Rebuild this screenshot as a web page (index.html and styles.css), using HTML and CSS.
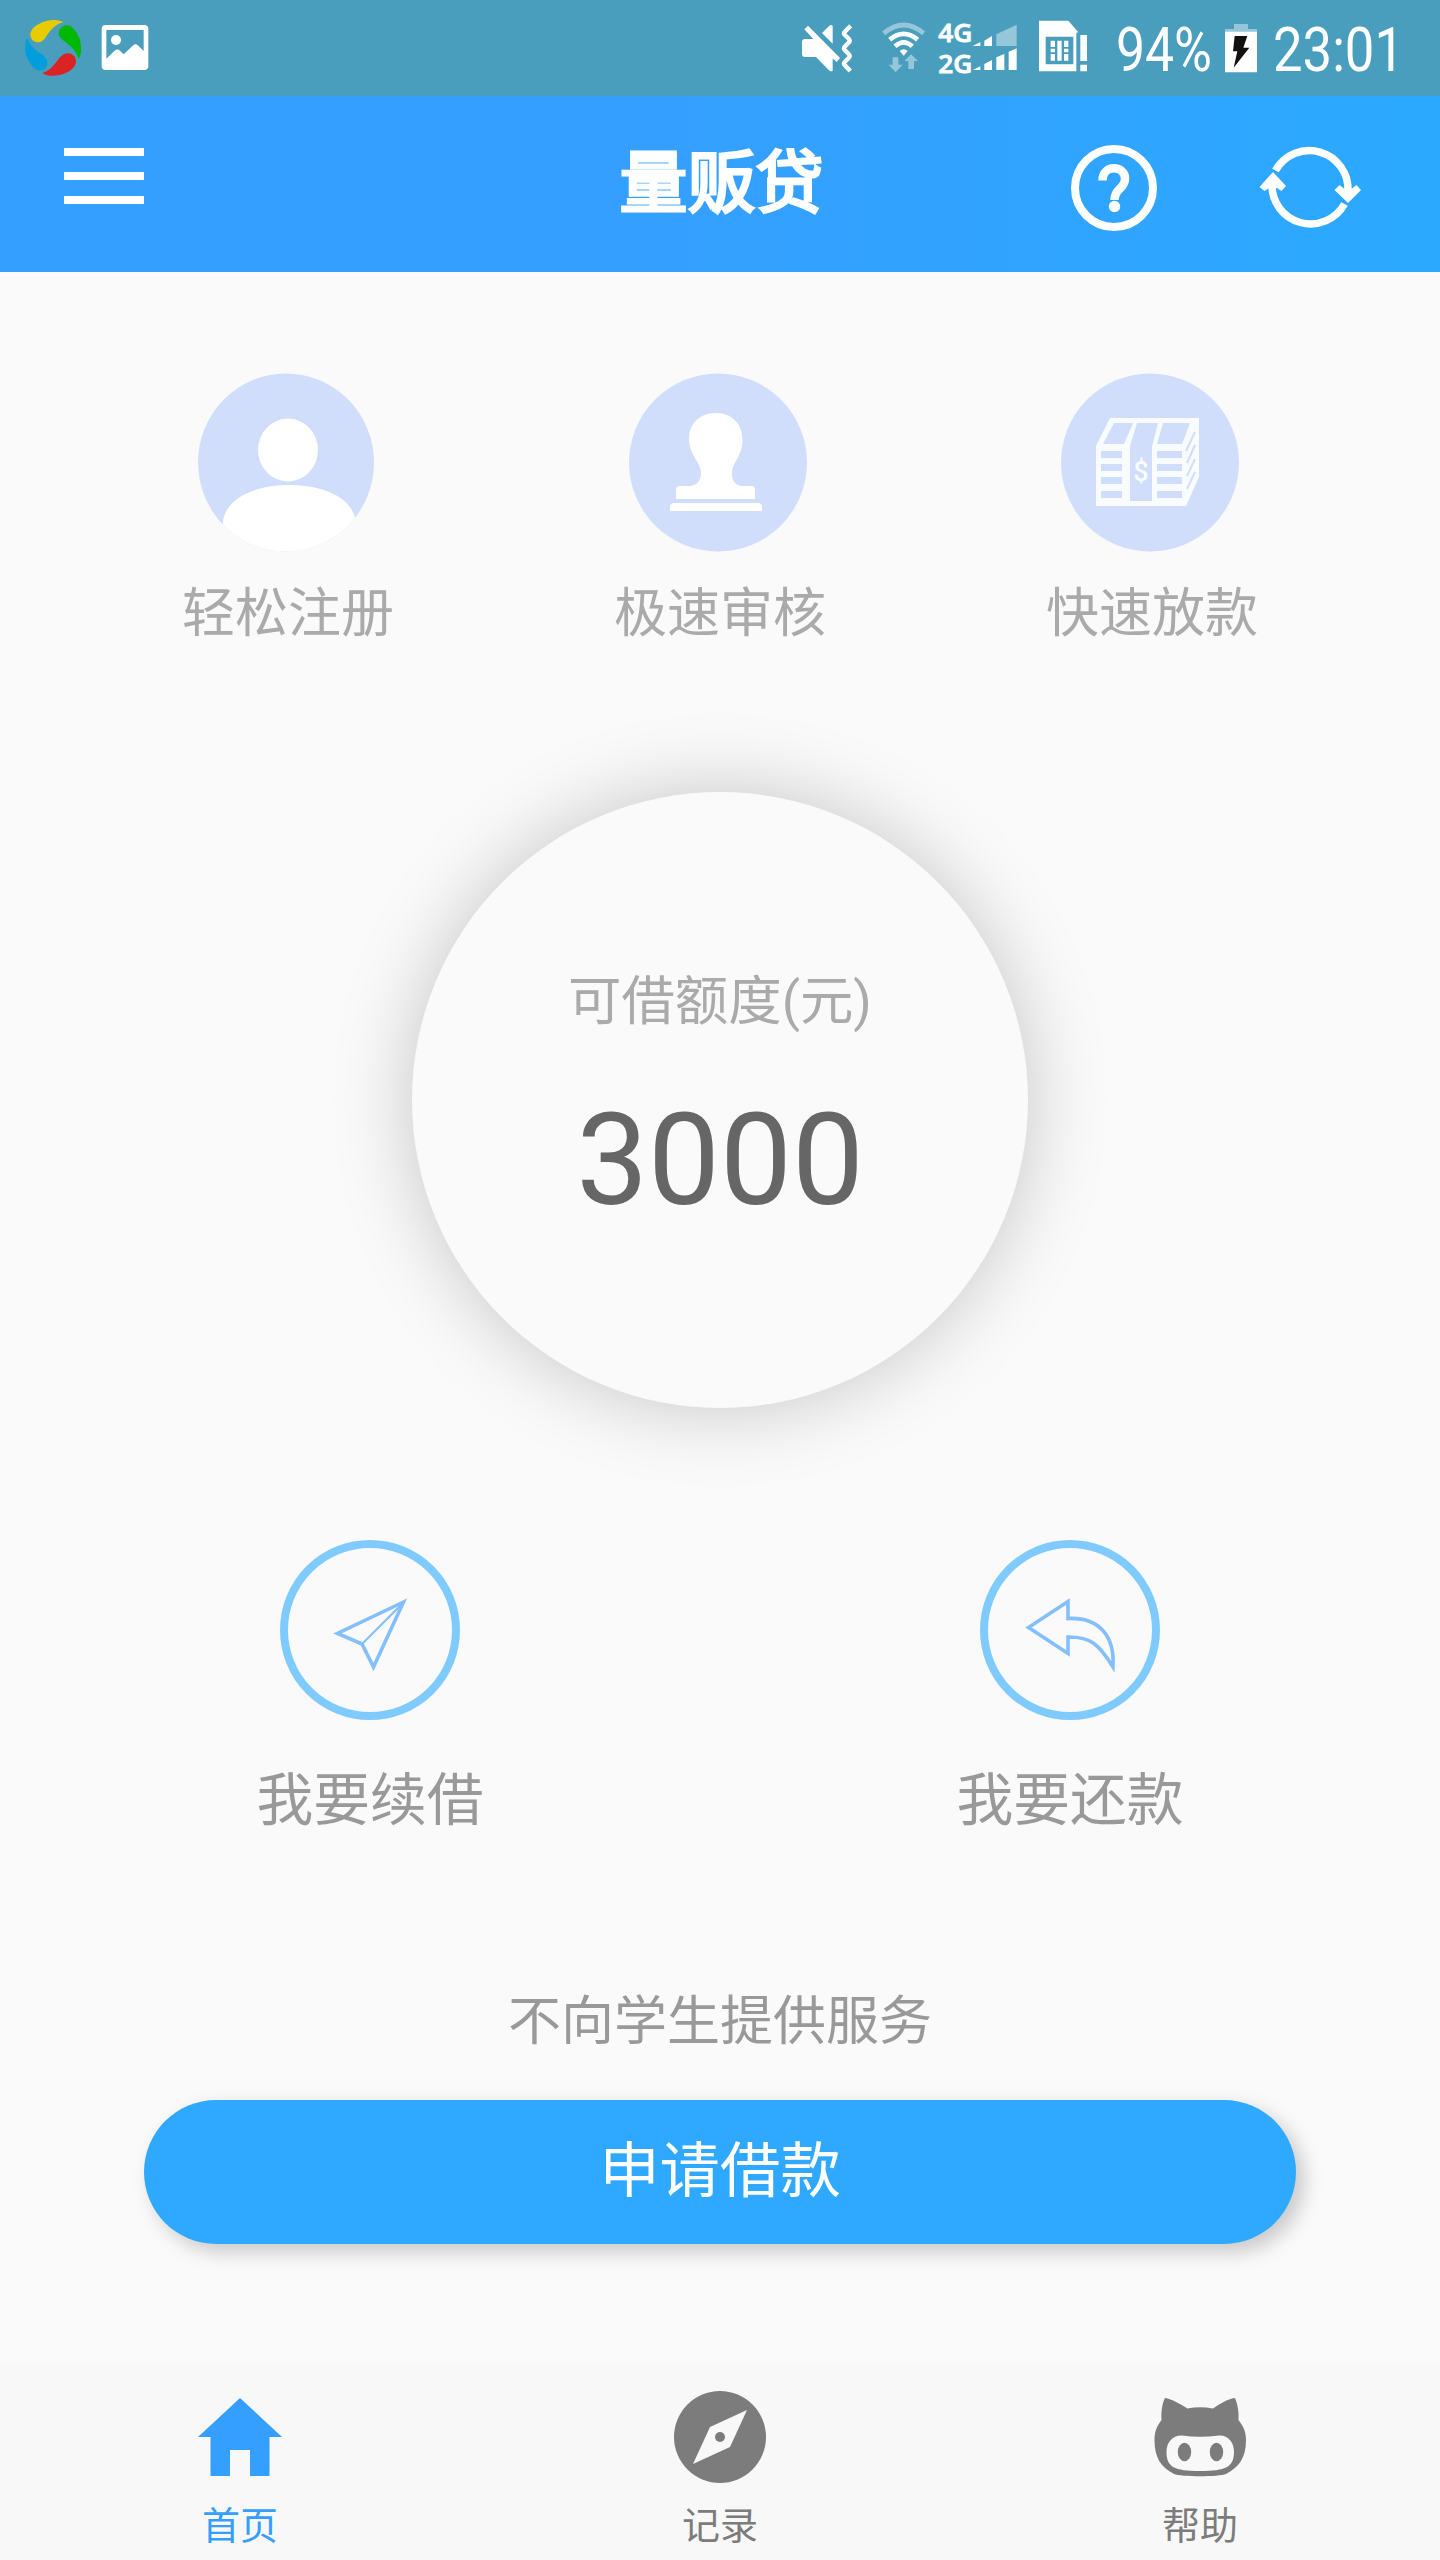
FILE: index.html
```html
<!DOCTYPE html>
<html lang="zh-CN">
<head>
<meta charset="utf-8">
<title>量贩贷</title>
<link rel="stylesheet" href="styles.css">
</head>
<body>
<div class="app">
  <div class="status">
    <svg class="st-pinwheel" viewBox="75 54 168 180">
      <path fill="#e9cc00" d="M190 67C176 58 148 57 124 68C103 77 90 91 91 106C93 120 104 128 117 127C126 126 133 119 138 110C152 91 166 71 190 67Z"/>
      <path fill="#00b800" d="M236 176C230 158 218 143 200 129C186 119 176 111 176 99C177 85 188 76 201 76C216 76 229 93 237 112C243 126 244 145 243 158C241 166 239 171 236 176Z"/>
      <path fill="#dc2323" d="M127 219C145 213 158 201 169 186C179 172 187 161 204 160C219 160 228 171 228 185C227 201 212 212 196 220C176 229 145 231 127 219Z"/>
      <path fill="#009edb" d="M82 113C86 131 99 144 116 157C130 166 143 174 142 189C141 204 130 212 119 212C104 211 92 195 83 177C74 159 72 131 82 113Z"/>
    </svg>
    <svg class="st-image" viewBox="303 54 144 168">
      <path fill="#fff" fill-rule="evenodd" d="M317 75H433Q445 75 445 87V198Q445 210 433 210H317Q305 210 305 198V87Q305 75 317 75ZM319 90V176L344 152Q352 145 360 152L371 163L398 137Q407 129 415 137L431 153V90Z"/>
      <circle cx="348" cy="120" r="15" fill="#fff"/>
    </svg>
    <svg class="st-mute" viewBox="60 54 162 168">
      <path fill="#fff" d="M84 77L180 174L170 186L158 175V212Q152 216 146 210L108 171H75Q66 171 66 162V126Q66 117 75 117H100L73 88ZM126 99L147 78Q152 73 158 77V131Z"/>
      <path fill="none" stroke="#fff" stroke-width="13" stroke-linejoin="round" d="M212 77L194 96Q190 100 194 104L207 117Q211 122 207 127L194 140Q190 145 194 150L207 163Q211 168 207 173L194 186Q190 191 194 195L211 213"/>
    </svg>
    <svg class="st-wifi" viewBox="303 54 135 168">
      <g fill="none" stroke="#fff" stroke-width="14">
        <path stroke="#96c6da" d="M311 100Q371 50 431 100"/>
        <path d="M329 119Q371 84 413 119"/>
        <path d="M345 139Q371 115 397 139"/>
      </g>
      <path fill="#fff" d="M359 153Q371 143 383 153L371 167Z"/>
      <path fill="#96c6da" d="M338 172H355V194H368L347 217L326 194H338ZM393 163L414 183H402V207H385V183H373Z"/>
    </svg>
    <svg class="st-signal" viewBox="474 54 240 168">
      <g fill="#fff">
        <text class="st-net" x="475" y="125" textLength="102" lengthAdjust="spacingAndGlyphs">4G</text>
        <text class="st-net" x="475" y="218" textLength="102" lengthAdjust="spacingAndGlyphs">2G</text>
        <path d="M578 138L601 126V138ZM613 122L636 108V138H613ZM578 210L601 199V210ZM613 192L636 180V210H613ZM649 172L673 162V210H649ZM686 155L710 145V210H686Z"/>
      </g>
      <path fill="#96c6da" d="M649 103L710 74V138H649Z"/>
    </svg>
    <svg class="st-sim" viewBox="774 54 150 168">
      <path fill="#fff" fill-rule="evenodd" d="M777 62H865L895 97L889 98V214H777ZM797 110V193H880V110Z"/>
      <path fill="#fff" d="M812 122H825V141H812ZM812 146H825V157H812ZM812 162H825V182H812ZM832 122H845V182H832ZM852 122H865V141H852ZM852 146H865V157H852ZM852 162H865V182H852ZM901 105H921V183H901ZM901 194H921V214H901Z"/>
    </svg>
    <svg class="st-level" viewBox="0 0 97 56"><text class="st-text" x="0" y="53" textLength="96" lengthAdjust="spacingAndGlyphs">94%</text></svg>
    <svg class="st-battery" viewBox="375 54 96 168">
      <path fill="#96c6da" d="M402 72H444V87H471V97H375V87H402Z"/>
      <path fill="#fff" d="M375 95H471V217H375Z"/>
      <path fill="#111" d="M404 108H442L430 143H448L401 203L412 154H399Z"/>
    </svg>
    <svg class="st-clock" viewBox="0 0 130 56"><text class="st-text" x="-1" y="53" textLength="131" lengthAdjust="spacingAndGlyphs">23:01</text></svg>
  </div>

  <header class="header">
    <div class="menu"><span></span><span></span><span></span></div>
    <h1 class="title">量贩贷</h1>
    <div class="header-actions">
      <svg class="help" viewBox="0 0 86 86" fill="none" stroke="#fff">
        <circle cx="43" cy="43" r="39" stroke-width="8"/>
        <path stroke-width="8.500" d="M31.500 35.500C31.500 19 54.500 20 54 34C54 44 43.500 43 43.500 55"/>
        <circle cx="43.500" cy="61.500" r="5.700" fill="#fff" stroke="none"/>
      </svg>
      <svg class="refresh" viewBox="0 0 102 86" fill="none" stroke="#fff" stroke-width="7.500">
        <path d="M16.500 25.500A38.700 38.700 0 0 1 89 46"/>
        <path d="M85.500 59A38.700 38.700 0 0 1 13 39"/>
        <path fill="#fff" stroke="none" d="M89 58L75.500 45L80.500 40L85 43.500H93L97.500 40L102 45ZM14 27L0.500 42L5.500 46L10 43H18L22.500 46L27 41Z"/>
      </svg>
    </div>
  </header>

  <main class="main">
    <section class="features">
      <div class="feature">
        <svg class="feature-icon" viewBox="0 0 180 180">
          <defs><clipPath id="disc"><ellipse cx="90" cy="90.500" rx="88" ry="89"/></clipPath></defs>
          <g clip-path="url(#disc)">
            <path fill="#d0defb" d="M0 0H180V180H0Z"/>
            <path fill="#fff" d="M27 157C24 129 55 113 93 113C130 113 158 127 160 151L164 180H22Z"/>
          </g>
          <ellipse cx="92" cy="78" rx="30" ry="31.500" fill="#fff"/>
        </svg>
        <p class="feature-label">轻松注册</p>
      </div>
      <div class="feature">
        <svg class="feature-icon" viewBox="0 0 180 180">
          <circle cx="90" cy="90.500" r="89" fill="#d0defb"/>
          <path fill="#fff" d="M88 41C105 41 115 53 114.500 69C114 85 104 90 104 102C104 109 107 113 114 114H124Q127 114 127 118V127H48V118Q48 114 52 114H62C69 113 73 109 73 101C73 90 61 83 61 67C61 52 71 41 88 41ZM46 131H130Q134 131 134 135V139H42V135Q42 131 46 131Z"/>
        </svg>
        <p class="feature-label">极速审核</p>
      </div>
      <div class="feature">
        <svg class="feature-icon" viewBox="0 0 180 180">
          <circle cx="90" cy="90.500" r="89" fill="#d0defb"/>
          <path fill="#f8fcff" d="M50 46H139V105L126 134H36V74Z"/>
          <path fill="#d0defb" d="M54 51H73L64 72H43ZM77 51H98L92 75V129H70V74ZM103 51H130L122 72H97ZM41 79H62V86H41ZM41 92H62V99H41ZM41 105H62V112H41ZM41 119H62V126H41ZM97 79H122V86H97ZM97 92H122V99H97ZM97 105H122V112H97ZM97 119H122V126H97Z"/>
          <path stroke="#d0defb" stroke-width="2" d="M126 79L135 60M127 91L135 73M127 104L135 87M127 117L135 100"/>
          <text class="money-sign" x="81" y="109">$</text>
        </svg>
        <p class="feature-label">快速放款</p>
      </div>
    </section>

    <section class="quota">
      <p class="quota-label">可借额度(元)</p>
      <p class="quota-value">3000</p>
    </section>

    <section class="actions">
      <div class="action">
        <div class="ring">
          <svg viewBox="0 0 180 180"><path d="M123.500 62L57.500 93.500L82 104L93.500 127Z"/><path stroke-width="2.200" d="M82 104L121 65"/></svg>
        </div>
        <p class="action-label">我要续借</p>
      </div>
      <div class="action">
        <div class="ring">
          <svg viewBox="0 0 180 180"><path d="M88 61.500L48.500 87.500L88 113.500V97C110 96.500 119 104 133 127C135 96 119 77 88 78.500Z"/></svg>
        </div>
        <p class="action-label">我要还款</p>
      </div>
    </section>

    <p class="notice">不向学生提供服务</p>
    <button class="apply">申请借款</button>
  </main>

  <nav class="tabs">
    <div class="tab tab-active">
      <svg viewBox="0 0 92 92"><path d="M46 7L88 46H75.500V85H56V59H36V85H16.500V46H4Z"/></svg>
      <span>首页</span>
    </div>
    <div class="tab">
      <svg viewBox="0 0 92 92"><circle cx="46" cy="46" r="46"/><path fill="#f8f8f8" d="M73 19L56 56L19 73L36 36Z"/><circle cx="46" cy="46" r="5"/></svg>
      <span>记录</span>
    </div>
    <div class="tab">
      <svg viewBox="0 0 92 92">
        <path d="M11 7C18 8 26 13 33.500 17.500Q46 15 59 17.500C66 13 73 8 81 7C84 14 85 21 84.500 29C89 35 92 40 92 49C92 67 85 76 72 83C65 86 27 86 20 83C7 76 0.500 67 0.500 49C0.500 40 3 35 7.500 29C7 21 8 13 11 7Z"/>
        <path fill="#f8f8f8" d="M28 44.500Q46 47 65 44.500C74 44 80 51 80 61C80 76 72 80 46 80C20 80 12.500 76 12.500 61C12.500 51 19 44 28 44.500Z"/>
        <ellipse cx="30.500" cy="61" rx="6.700" ry="9.300"/><ellipse cx="62.500" cy="61" rx="6.700" ry="9.300"/>
      </svg>
      <span>帮助</span>
    </div>
  </nav>
</div>
</body>
</html>
```
FILE: styles.css
```css
* { box-sizing: border-box; }
body {
  margin: 0;
  background: #fafafa;
  font-family: "Noto Sans CJK SC", Roboto, sans-serif;
}
p, h1 { margin: 0; font-weight: 400; }
svg { display: block; flex: none; overflow: visible; }

.app {
  width: 1440px;
  height: 2560px;
  display: flex;
  flex-direction: column;
}

/* Status bar */
.status {
  flex: none;
  height: 96px;
  padding: 18px 0 0 25px;
  display: flex;
  align-items: flex-start;
  background: #4a9ebd;
}
.status svg { height: 56px; }
.status .st-pinwheel { width: 56px; height: 60px; }
.st-image { width: 48px; margin-left: 20px; }
.st-mute { width: 54px; margin-left: 651px; }
.st-wifi { width: 45px; margin-left: 27px; }
.st-signal { width: 80px; margin-left: 12px; }
.st-sim { width: 50px; margin-left: 20px; }
.st-level { width: 97px; margin-left: 28px; }
.st-battery { width: 32px; margin-left: 12px; }
.st-clock { width: 130px; margin-left: 17px; }
.st-net {
  font: 600 78px "Open Sans", "Noto Sans", sans-serif;
  stroke: #fff;
  stroke-width: 2.5;
}
.st-text { font: 400 61px Roboto, sans-serif; fill: #fff; }

/* Header */
.header {
  flex: none;
  height: 176px;
  padding: 0 79px 0 64px;
  display: grid;
  grid-template-columns: 1fr 204px 1fr;
  align-items: start;
  background: linear-gradient(to right, #359fff 45%, #2ba9ff);
}
.menu { display: grid; gap: 16px; width: 80px; padding-top: 52px; }
.menu span { height: 8px; background: #fff; }
.title {
  margin: 42px -9px 0 9px;
  font-size: 68px;
  line-height: 80px;
  -webkit-text-stroke: 3px #fff;
  color: #fff;
}
.header-actions {
  display: flex;
  justify-content: flex-end;
  gap: 102px;
  padding-top: 49px;
}
.help { width: 86px; height: 86px; }
.refresh { width: 102px; height: 86px; }

/* Main content */
.main {
  flex: 1;
  padding-top: 100px;
  display: flex;
  flex-direction: column;
  align-items: center;
}
.features { display: grid; grid-template-columns: repeat(3, 432px); }
.feature, .action, .tab {
  display: flex;
  flex-direction: column;
  align-items: center;
}
.feature-icon { width: 180px; height: 180px; margin-right: 4px; }
.feature-label {
  margin-top: 17px;
  font-size: 53px;
  line-height: 80px;
  color: #aaa;
}
.money-sign { font: 500 27px Roboto, sans-serif; fill: #f8fcff; text-anchor: middle; }

.quota {
  width: 616px;
  height: 616px;
  margin-top: 143px;
  padding-top: 170px;
  border-radius: 50%;
  background: #fafafa;
  box-shadow: 0 0 80px rgba(0, 0, 0, .21);
  text-align: center;
}
.quota-label {
  font-family: Roboto, "Noto Sans CJK SC", sans-serif;
  font-size: 53.4px;
  line-height: 80px;
  color: #aaa;
}
.quota-value {
  margin-top: 43px;
  font-family: Roboto, sans-serif;
  font-size: 128px;
  line-height: 150px;
  color: #666;
}

.actions {
  margin-top: 132px;
  display: grid;
  grid-template-columns: repeat(2, 700px);
}
.ring {
  width: 180px;
  height: 180px;
  border: 8px solid #7fcaff;
  border-radius: 50%;
}
.ring svg {
  width: 180px;
  height: 180px;
  margin: -8px;
  fill: none;
  stroke: #84c0ff;
  stroke-width: 3.6;
}
.action-label {
  margin-top: 35px;
  font-size: 56.8px;
  line-height: 80px;
  color: #999;
}

.notice {
  margin-top: 142px;
  font-size: 53px;
  line-height: 80px;
  color: #999;
}
.apply {
  width: 1152px;
  height: 144px;
  margin-top: 43px;
  padding: 0 0 12px;
  border: 0;
  border-radius: 72px;
  background: #2fa9ff;
  box-shadow: 8px 8px 20px rgba(0, 0, 0, .2);
  font: 400 60.4px/132px "Noto Sans CJK SC", sans-serif;
  color: #fff;
}

/* Tab bar */
.tabs {
  flex: none;
  height: 196px;
  padding-top: 27px;
  display: grid;
  grid-template-columns: repeat(3, 480px);
  background: #f8f8f8;
}
.tab { color: #7c7c7c; fill: currentColor; }
.tab-active { color: #359fff; }
.tab svg { width: 92px; height: 92px; }
.tab span { margin-top: 15px; font-size: 38px; line-height: 50px; }
```
